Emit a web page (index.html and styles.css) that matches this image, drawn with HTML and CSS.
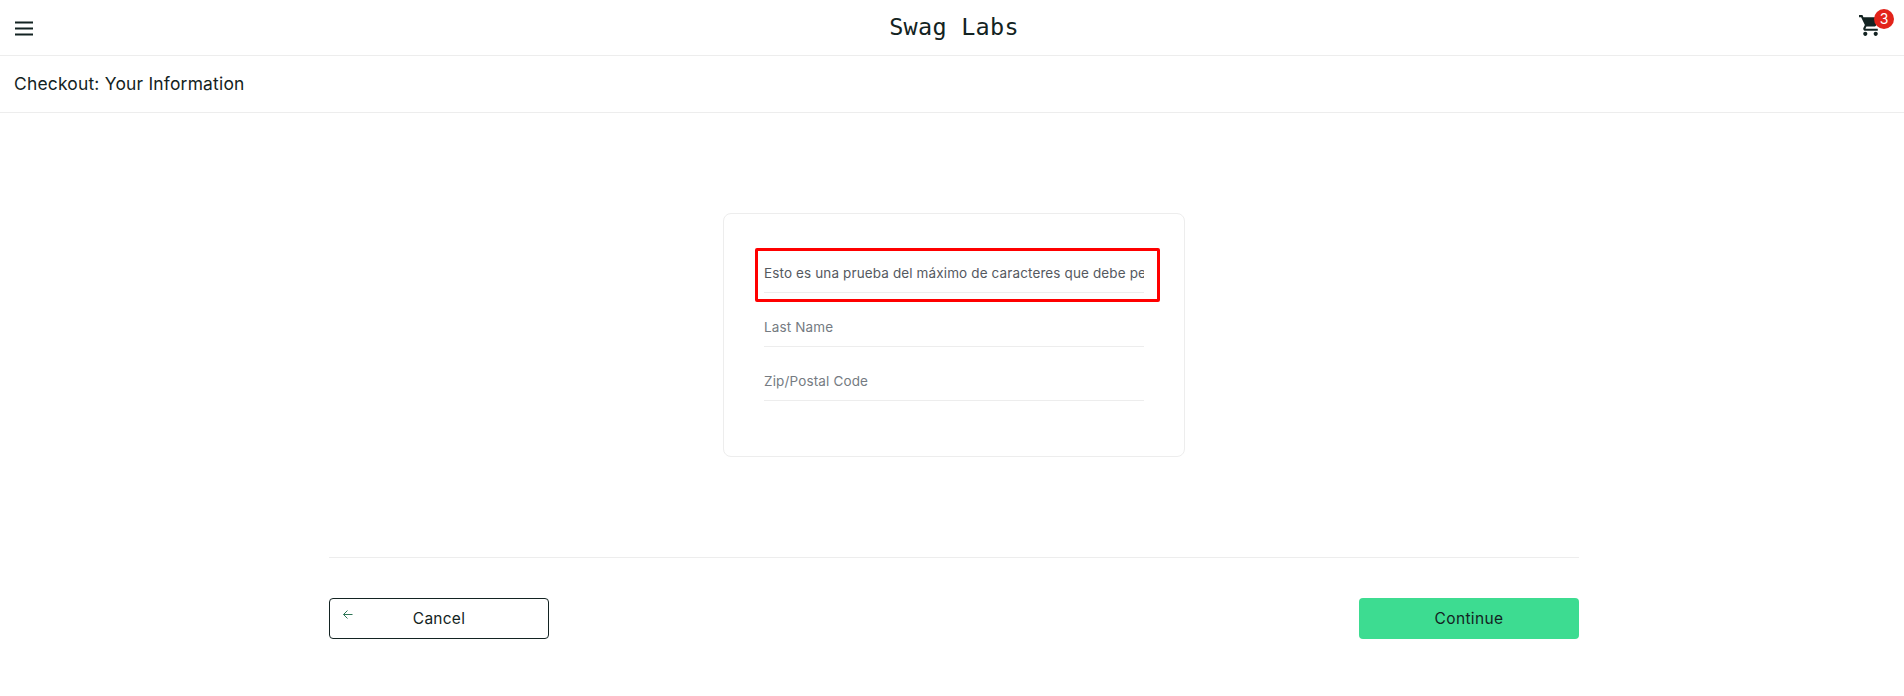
FILE: index.html
```html
<!DOCTYPE html>
<html lang="en">
<head>
<meta charset="utf-8">
<title>Swag Labs</title>
<link rel="stylesheet" href="styles.css">
</head>
<body>
<header class="header">
  <button class="menu" aria-label="Open Menu">
    <svg width="18" height="15" viewBox="0 0 18 15"><path d="M0 1.5h18M0 7.5h18M0 13.5h18" stroke="#132322" stroke-width="2.2"/></svg>
  </button>
  <div class="logo">Swag Labs</div>
  <a class="cart">
    <svg class="cart-icon" width="25" height="25" viewBox="0 0 24 24"><path fill="#132322" d="M7 18c-1.1 0-1.99.9-1.99 2S5.9 22 7 22s2-.9 2-2-.9-2-2-2zM1 2v2h2l3.6 7.59-1.35 2.45c-.16.28-.25.61-.25.96 0 1.1.9 2 2 2h12v-2H7.42c-.14 0-.25-.11-.25-.25l.03-.12.9-1.63h7.45c.75 0 1.41-.41 1.75-1.03l3.58-6.49A1 1 0 0 0 20 4H5.21l-.94-2H1zm16 16c-1.1 0-1.99.9-1.99 2s.89 2 1.99 2 2-.9 2-2-.9-2-2-2z"/></svg>
    <span class="badge">3</span>
  </a>
</header>
<div class="subheader"><span class="title">Checkout: Your Information</span></div>
<form class="checkout">
  <div class="card">
    <div class="field marked"><input class="input first" value="Esto es una prueba del máximo de caracteres que debe permitir"></div>
    <div class="field"><input class="input last" placeholder="Last Name"></div>
    <div class="field"><input class="input zip" placeholder="Zip/Postal Code"></div>
  </div>
  <div class="actions">
    <button type="button" class="btn cancel">
      <svg class="arrow" width="10" height="9" viewBox="0 0 10 9"><path d="M4.5.5l-4 4 4 4M.5 4.5h9" fill="none" stroke="#2f7757" stroke-width="1"/></svg>
      <span class="cancel-text">Cancel</span>
    </button>
    <button type="button" class="btn continue"><span class="continue-text">Continue</span></button>
  </div>
</form>
</body>
</html>
```
FILE: styles.css
```css
* { box-sizing: border-box; }
body {
  margin: 0;
  background: #fff;
  color: #132322;
  font-family: Inter, sans-serif;
}
button { font: inherit; color: inherit; padding: 0; background: none; border: 0; }
.header {
  display: grid;
  grid-template-columns: 1fr auto 1fr;
  height: 56px;
  border-bottom: 1px solid #ededed;
}
.menu { justify-self: start; display: block; height: 15px; margin: 21px 0 0 15px; }
.menu svg { display: block; }
.logo {
  font: 23.5px/27px "DejaVu Sans Mono", monospace;
  letter-spacing: .25px;
  margin: 14px 0 0 4px;
}
.cart { position: relative; justify-self: end; width: 46px; height: 55px; }
.cart-icon { display: block; margin-top: 13px; }
.badge {
  position: absolute;
  left: 16px;
  top: 9px;
  width: 20px;
  height: 20px;
  border-radius: 50%;
  background: #e2231a;
  color: #fff;
  font-size: 14px;
  line-height: 20px;
  text-align: center;
}
.subheader {
  height: 57px;
  padding: 0 14px;
  line-height: 56px;
  border-bottom: 1px solid #ededed;
}
.title { font-size: 17.4px; letter-spacing: .22px; }
.checkout { width: 1250px; margin: 100px 0 0 329px; }
.card {
  width: 462px;
  height: 244px;
  margin-left: 394px;
  padding: 34px 31px;
  border: 1px solid #ededed;
  border-radius: 8px;
}
.field { width: 404px; height: 54px; padding: 0 12px 0 9px; }
.marked { position: relative; }
.marked::after {
  content: "";
  position: absolute;
  inset: 0 -1px 0 0;
  border: 3px solid #f00;
  border-radius: 2px;
}
.input {
  display: block;
  width: 380px;
  height: 45px;
  padding: 6px 0 0;
  border: 0;
  border-bottom: 1px solid #ededed;
  outline: 0;
  background: none;
  color: #55595f;
  font: 13.5px Inter, sans-serif;
  letter-spacing: .15px;
}
.first { letter-spacing: .125px; }
.input::placeholder { color: #757b82; opacity: 1; }
.actions {
  display: flex;
  justify-content: space-between;
  margin-top: 100px;
  padding-top: 40px;
  border-top: 1px solid #ededed;
}
.btn {
  position: relative;
  width: 220px;
  height: 41px;
  border-radius: 4px;
  font-size: 15.5px;
  letter-spacing: .25px;
}
.cancel { border: 1px solid #132322; }
.continue { background: #3ddc91; letter-spacing: .35px; }
.arrow { position: absolute; left: 13px; top: 11px; }
```
